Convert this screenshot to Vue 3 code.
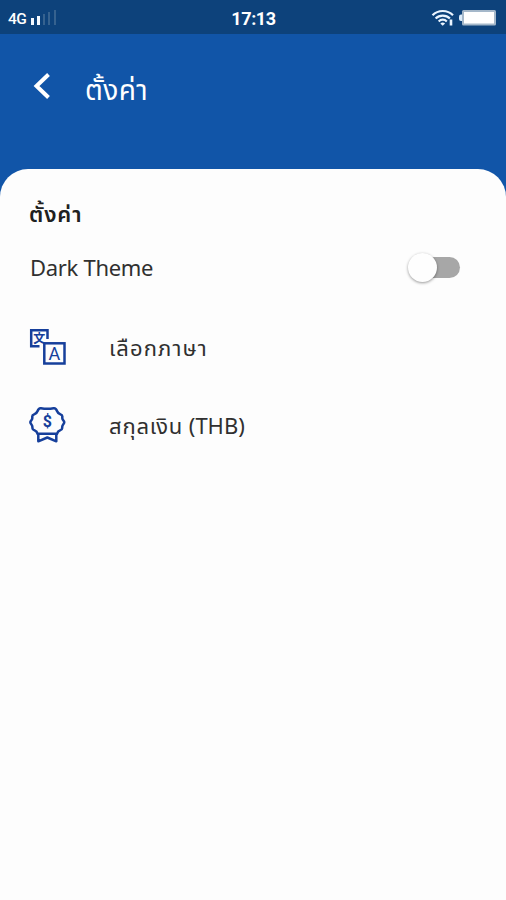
<template>
  <div class="screen">
    <div class="status-bar">
      <div class="status-left">
        <span class="network">4G</span>
        <svg class="signal" width="27" height="17" viewBox="0 0 27 17">
          <rect
            v-for="bar in signalBars"
            :key="bar.x"
            :x="bar.x"
            :y="16 - bar.height"
            :width="bar.width"
            :height="bar.height"
            :fill="bar.active ? '#f4f9ff' : '#36628f'"
          />
        </svg>
      </div>
      <span class="clock">17:13</span>
      <div class="status-right">
        <svg width="24" height="18" viewBox="0 0 24 18" fill="none" stroke="#eaf4ff">
          <path d="M1.500 6.200C7 .6 16.500.6 22 6.200" stroke-width="2.200" />
          <path d="M4.600 9.500C8.500 5.600 15 5.600 18.900 9.500" stroke-width="2.200" />
          <path d="M7.700 12.400C10 10 13.500 10 15.800 12.400" stroke-width="2.200" />
          <path d="M9.300 14.400q2.400-1.700 4.800 0l-2.400 2.400z" fill="#eaf4ff" stroke="none" />
          <path d="M20 10.500v6" stroke-width="2.600" />
        </svg>
        <svg width="38" height="18" viewBox="0 0 38 18">
          <path d="M4 5.500H3a2 2 0 0 0-2 2v2.500a2 2 0 0 0 2 2h1z" fill="#dcecfb" />
          <rect x="4" y="1" width="34" height="15.500" rx="1.500" fill="#a5b8ca" />
          <rect x="6" y="3" width="30" height="11.500" fill="#ffffff" />
        </svg>
      </div>
    </div>

    <header class="header">
      <button class="back-button" aria-label="Back" @click="goBack">
        <svg width="18" height="28" viewBox="0 0 18 28">
          <path d="M15.500 2.500L3.500 14l12 11.500" fill="none" stroke="#fff" stroke-width="4" />
        </svg>
      </button>
      <h1 class="title">ตั้งค่า</h1>
    </header>

    <main class="card">
      <h2 class="section-title">ตั้งค่า</h2>

      <div class="theme-row">
        <span class="theme-label">Dark Theme</span>
        <button
          class="switch"
          :class="{ on: darkTheme }"
          role="switch"
          :aria-checked="darkTheme"
          @click="darkTheme = !darkTheme"
        >
          <span class="thumb"></span>
        </button>
      </div>

      <div class="menu">
        <div class="menu-row">
          <svg class="menu-icon" width="38" height="38" viewBox="0 0 38 38" fill="none" stroke="#163f9b" stroke-width="2.500">
            <path d="M10.500 18.300H2.200V2.200H18.500V11" />
            <rect x="15.300" y="15.300" width="20.200" height="20.200" />
            <text class="glyph-cjk" x="10.300" y="14.600">文</text>
            <text class="glyph-a" x="25.400" y="31.500">A</text>
          </svg>
          <span class="menu-label language">เลือกภาษา</span>
        </div>

        <div class="menu-row">
          <svg class="menu-icon" width="38" height="38" viewBox="0 0 38 38" fill="none" stroke="#163f9b" stroke-width="2.500" stroke-linejoin="round">
            <path d="M12 2.200Q18.300 3.500 24.600 2.200C26.700 1.800 27.300 3 28 5C28.800 7.300 29.800 7.800 31.500 8.400C33.700 9.200 33.500 10.500 33.300 11.500C33 13 34 14 34.800 15C35.500 16 35.300 17 34.500 18C33.500 19.200 33 20.300 33.200 21.700C33.400 23.200 32.600 23.800 31 24.400C29.200 25.100 28.500 26 28 27.800H8.600C8.100 26 7.400 25.100 5.600 24.400C4 23.800 3.200 23.200 3.400 21.700C3.600 20.300 3.100 19.200 2.100 18C1.300 17 1.100 16 1.800 15C2.600 14 3.600 13 3.300 11.500C3.100 10.500 2.900 9.200 5.100 8.400C6.800 7.800 7.800 7.300 8.600 5C9.300 3 9.900 1.800 12 2.200Z" />
            <path d="M9.300 27.800V35.300L18.300 31.500L27.300 35.300V27.800" />
            <text class="glyph-dollar" x="18.300" y="20.500">$</text>
          </svg>
          <span class="menu-label currency"><span class="currency-name">สกุลเงิน</span> (THB)</span>
        </div>
      </div>
    </main>
  </div>
</template>

<script setup>
import { ref } from 'vue'

const darkTheme = ref(false)

const signalBars = [
  { x: 1, width: 3, height: 7, active: true },
  { x: 7, width: 3, height: 9, active: true },
  { x: 13, width: 2, height: 11, active: false },
  { x: 18, width: 2, height: 13, active: false },
  { x: 24, width: 2, height: 15, active: false }
]

const goBack = () => {
  window.history.back()
}
</script>

<style>
body {
  margin: 0;
  background-color: #fdfdfd;
}
</style>

<style scoped>
.screen {
  display: flex;
  flex-direction: column;
  height: 900px;
  overflow: hidden;
  background: linear-gradient(#1155a8 250px, #fdfdfd 250px);
  font-family: "Noto Sans Thai", "Noto Sans", sans-serif;
}

.status-bar {
  display: grid;
  grid-template-columns: 1fr auto 1fr;
  align-items: center;
  box-sizing: border-box;
  height: 34px;
  padding: 1px 10px 0 8px;
  background-color: #0d427b;
  color: #fff;
  font-family: Roboto, sans-serif;
}

.status-left,
.status-right {
  display: flex;
  align-items: center;
}

.status-left {
  gap: 4px;
}

.status-right {
  justify-content: flex-end;
  gap: 3px;
}

.network {
  padding-top: 3px;
  font-size: 15.5px;
  font-weight: 500;
  letter-spacing: -0.5px;
  line-height: 18px;
}

.clock {
  padding: 2px 0 0 3px;
  font-size: 18px;
  font-weight: 700;
  letter-spacing: -0.4px;
  line-height: 20px;
}

.header {
  display: flex;
  box-sizing: border-box;
  height: 135px;
  padding: 38px 33px 0;
}

.back-button {
  width: 18px;
  height: 28px;
  padding: 0;
  border: none;
  background: none;
  cursor: pointer;
}

.title {
  margin: 2px 0 0 34px;
  color: #fff;
  font-size: 28px;
  font-weight: 400;
  letter-spacing: 0.4px;
  line-height: 36px;
}

.card {
  flex: 1;
  box-sizing: border-box;
  padding: 30px 30px 0;
  border-radius: 28px 28px 0 0;
  background-color: #fdfdfd;
  color: #303030;
}

.section-title {
  margin: 1px 0 0 -1px;
  color: #202020;
  font-size: 22px;
  font-weight: 600;
  letter-spacing: 0.9px;
  line-height: 32px;
}

.theme-row {
  display: flex;
  align-items: center;
  justify-content: space-between;
  height: 40px;
  margin-top: 15px;
}

.theme-label {
  font-family: "Noto Sans", sans-serif;
  font-size: 22px;
  letter-spacing: -0.3px;
  line-height: 30px;
}

.switch {
  display: flex;
  align-items: center;
  width: 47px;
  height: 21px;
  margin-right: 16px;
  padding: 0;
  border: none;
  border-radius: 11px;
  background-color: #a7a7a7;
  cursor: pointer;
}

.thumb {
  flex: none;
  width: 29px;
  height: 29px;
  margin-left: -5px;
  border-radius: 50%;
  background-color: #fefefe;
  box-shadow: 0 1px 3px rgba(0, 0, 0, 0.4);
}

.switch.on {
  justify-content: flex-end;
  background-color: #6c9bd2;
}

.menu {
  margin-top: 21px;
}

.menu-row {
  display: flex;
  align-items: center;
  height: 78px;
}

.menu-icon {
  flex: none;
  margin-left: -1px;
}

.menu-label {
  margin: 5px 0 0 42px;
  font-size: 22px;
  line-height: 34px;
  white-space: nowrap;
}

.language {
  letter-spacing: 1.1px;
}

.currency-name {
  letter-spacing: 0.8px;
}

.menu-icon text {
  fill: #163f9b;
  stroke: none;
  text-anchor: middle;
}

.glyph-cjk {
  font: 700 12px "Noto Sans CJK JP", sans-serif;
}

.glyph-a {
  font: 400 18px Roboto, sans-serif;
}

.glyph-dollar {
  font: 700 16px Roboto, sans-serif;
}
</style>
